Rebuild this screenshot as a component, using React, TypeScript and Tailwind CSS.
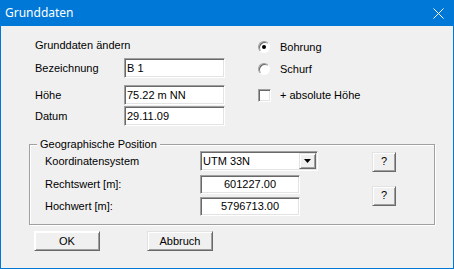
import React from "react";

// Classic Win32 3D edges
const SUNKEN =
  "bg-white border border-t-[#a0a0a0] border-l-[#a0a0a0] border-r-white border-b-white shadow-[inset_1px_1px_0_#696969,inset_-1px_-1px_0_#e3e3e3]";
const RAISED =
  "bg-[#f0f0f0] border border-t-[#e3e3e3] border-l-[#e3e3e3] border-r-[#696969] border-b-[#696969] shadow-[inset_1px_1px_0_#ffffff,inset_-1px_-1px_0_#a0a0a0]";

function TextField({ value, width, height = "h-[20px]", center = false }: { value: string; width: string; height?: string; center?: boolean }) {
  return (
    <div className={`${SUNKEN} ${width} ${height} flex items-center px-[2px] leading-none ${center ? "justify-center" : ""}`}>
      {value}
    </div>
  );
}

function Radio({ label, checked = false }: { label: string; checked?: boolean }) {
  return (
    <div className="flex items-center h-[14px]">
      <div className="w-[12px] h-[12px] rounded-full bg-white border border-t-[#a0a0a0] border-l-[#a0a0a0] border-r-white border-b-white shadow-[inset_1px_1px_0_#696969] flex items-center justify-center">
        {checked && <div className="w-[4px] h-[4px] rounded-full bg-black" />}
      </div>
      <span className="ml-[10px]">{label}</span>
    </div>
  );
}

function PushButton({ label, className = "" }: { label: string; className?: string }) {
  return (
    <div className={`${RAISED} flex items-center justify-center leading-none ${className}`}>
      {label}
    </div>
  );
}

export default function App() {
  return (
    <div className="w-[454px] h-[269px] flex flex-col bg-[#0078d7] font-['Liberation_Sans',Arial,sans-serif] text-[11px] text-black">
      {/* Title bar */}
      <div className="h-[26px] shrink-0 flex items-center justify-between pl-[5px] pr-[10px] text-white font-['Noto_Sans',sans-serif] text-[12px]">
        <span>Grunddaten</span>
        <svg width="11" height="11" viewBox="0 0 11 11" className="mr-[0px]">
          <path d="M0.5 0.5 L10.5 10.5 M10.5 0.5 L0.5 10.5" stroke="white" strokeWidth="1" />
        </svg>
      </div>

      <div className="flex-1 mx-px mb-px bg-[#f0f0f0] flex flex-col">
        {/* Top section */}
        <div className="flex items-start">
          <div className="ml-[34px] flex flex-col">
            <div className="mt-[12px] h-[14px] leading-[14px]">Grunddaten ändern</div>
            <div className="mt-[6px] flex items-center">
              <span className="w-[89px]">Bezeichnung</span>
              <TextField value="B 1" width="w-[101px]" />
            </div>
            <div className="mt-[7px] flex items-center">
              <span className="w-[89px]">Höhe</span>
              <TextField value="75.22 m NN" width="w-[101px]" />
            </div>
            <div className="mt-[1px] flex items-center">
              <span className="w-[89px]">Datum</span>
              <TextField value="29.11.09" width="w-[101px]" />
            </div>
          </div>

          <div className="ml-[33px] flex flex-col">
            <div className="mt-[14px]">
              <Radio label="Bohrung" checked />
            </div>
            <div className="mt-[8px]">
              <Radio label="Schurf" />
            </div>
            <div className="mt-[12px] flex items-center h-[14px]">
              <div className={`${SUNKEN} w-[13px] h-[13px]`} />
              <span className="ml-[9px]">+ absolute Höhe</span>
            </div>
          </div>
        </div>

        {/* Group box */}
        <div className="relative ml-[28px] mt-[18px] w-[406px] h-[81px] border border-[#a0a0a0] shadow-[inset_1px_1px_0_#ffffff,1px_1px_0_#ffffff]">
          <span className="absolute left-[7px] top-[-8px] px-[3px] h-[14px] leading-[14px] bg-[#f0f0f0]">
            Geographische Position
          </span>
          <div className="pt-[6px] pl-[15px] grid grid-cols-[155px_172px_24px] grid-rows-[21px_19px_19px] gap-y-[3px]">
            <span className="self-center">Koordinatensystem</span>
            <div className={`${SUNKEN} w-[118px] h-[20px] flex items-center justify-between pl-[2px] pr-[1px] self-start`}>
              <span className="leading-none">UTM 33N</span>
              <div className={`${RAISED} w-[17px] h-[16px] flex items-center justify-center`}>
                <svg width="7" height="4" viewBox="0 0 7 4">
                  <path d="M0 0 H7 L3.5 4 Z" fill="black" />
                </svg>
              </div>
            </div>
            <PushButton label="?" className="w-[24px] h-[20px] self-center" />

            <span className="self-center">Rechtswert [m]:</span>
            <TextField value="601227.00" width="w-[100px]" height="h-[19px]" center />
            <PushButton label="?" className="row-span-2 w-[24px] h-[20px] self-center" />

            <span className="self-center">Hochwert [m]:</span>
            <TextField value="5796713.00" width="w-[100px]" height="h-[19px]" center />
          </div>
        </div>

        {/* Buttons */}
        <div className="ml-[33px] mt-[6px] flex gap-[47px]">
          <PushButton label="OK" className="w-[66px] h-[20px] border-[#696969] border-t-white border-l-white" />
          <PushButton label="Abbruch" className="w-[66px] h-[20px]" />
        </div>
      </div>
    </div>
  );
}
